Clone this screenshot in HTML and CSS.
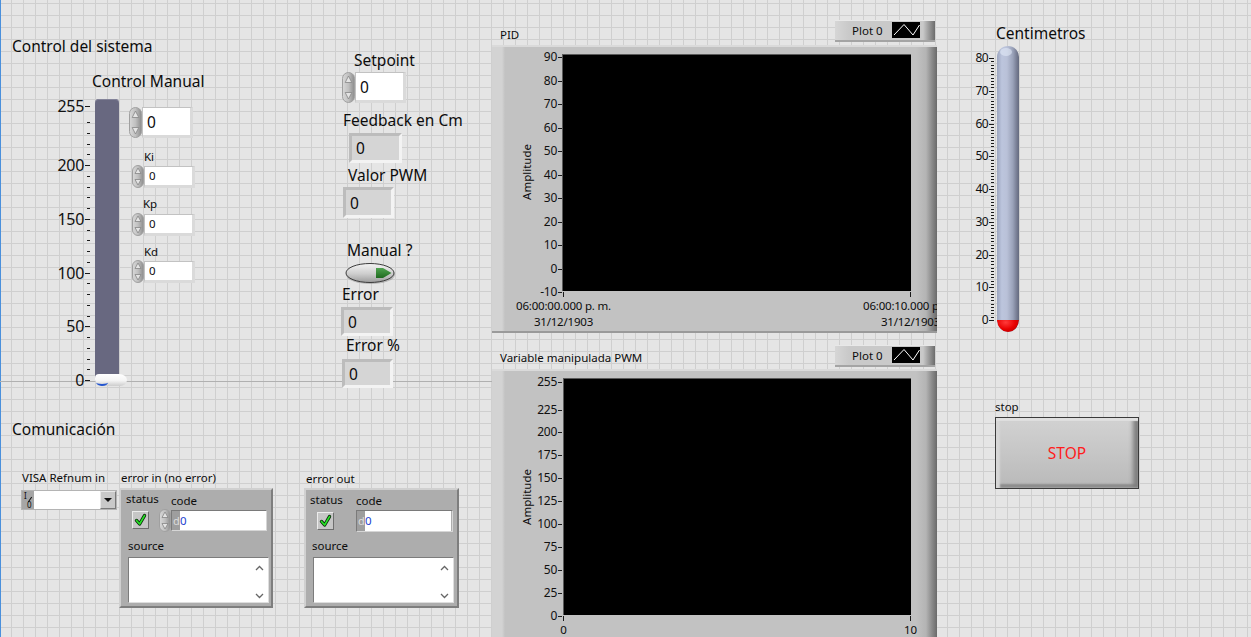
FILE: index.html
```html
<!DOCTYPE html>
<html lang="es">
<head>
  <meta charset="UTF-8">
  <meta name="viewport" content="width=device-width, initial-scale=1.0">
  <title>Control del sistema</title>
  <link rel="stylesheet" href="styles.css">
</head>
<body>
  <svg class="defs" width="0" height="0">
    <defs>
      <linearGradient id="spinFace" x1="0" x2="1" y1="0" y2="0">
        <stop offset="0" stop-color="#d8d8d8"/>
        <stop offset="0.5" stop-color="#c0c0c0"/>
        <stop offset="1" stop-color="#8c8c8c"/>
      </linearGradient>
      <linearGradient id="ledFace" x1="0" x2="0" y1="0" y2="1">
        <stop offset="0" stop-color="#f4f4f4"/>
        <stop offset="0.55" stop-color="#cdcdcd"/>
        <stop offset="1" stop-color="#9c9c9c"/>
      </linearGradient>
      <linearGradient id="ledGreen" x1="0" x2="0" y1="0" y2="1">
        <stop offset="0" stop-color="#4fa34f"/>
        <stop offset="1" stop-color="#1f6a1f"/>
      </linearGradient>
      <symbol id="spinLg" viewBox="0 0 13 31">
        <rect x="0.5" y="0.5" width="12" height="30" rx="6" fill="url(#spinFace)" stroke="#a0a0a0"/>
        <path d="M6.5 4 L9.8 10.5 H3.2 Z" fill="#e4e4e4" stroke="#858585" stroke-width="0.8"/>
        <path d="M6.5 27 L9.8 20.5 H3.2 Z" fill="#e4e4e4" stroke="#858585" stroke-width="0.8"/>
      </symbol>
      <symbol id="spinSm" viewBox="0 0 12 23">
        <rect x="0.5" y="0.5" width="11" height="22" rx="5.5" fill="url(#spinFace)" stroke="#a0a0a0"/>
        <path d="M6 3 L9 8.5 H3 Z" fill="#e4e4e4" stroke="#858585" stroke-width="0.8"/>
        <path d="M6 20 L9 14.5 H3 Z" fill="#e4e4e4" stroke="#858585" stroke-width="0.8"/>
      </symbol>
      <symbol id="tick" viewBox="0 0 16 18">
        <path d="M3.5 9.5 L7 13.5 L12.5 4" fill="none" stroke="#0c2e0c" stroke-width="3.8" stroke-linecap="round" stroke-linejoin="round"/>
        <path d="M3.5 9.5 L7 13.5 L12.5 4" fill="none" stroke="#27e627" stroke-width="1.8" stroke-linecap="round" stroke-linejoin="round"/>
      </symbol>
      <symbol id="plotLine" viewBox="0 0 28 16">
        <rect width="28" height="16" fill="#000"/>
        <polyline points="2,13 12,2.5 21,13 27.5,3" fill="none" stroke="#fff" stroke-width="1"/>
      </symbol>
    </defs>
  </svg>

  <div class="panel">
    <div class="divider"></div>

    <!-- Control del sistema -->
    <div class="cap big cap-sistema">Control del sistema</div>
    <div class="cap big cap-manual">Control Manual</div>

    <div class="scale scale-slider" data-min="0" data-max="255" data-labels="255,200,150,100,50,0" data-minor="10"></div>
    <div class="slider-track"></div>
    <div class="slider-thumb"></div>

    <div class="num num-lg num-manual">
      <svg class="spin-lg"><use href="#spinLg"/></svg>
      <span class="num-box">0</span>
    </div>

    <div class="cap small cap-ki">Ki</div>
    <div class="num num-sm num-ki">
      <svg class="spin-sm"><use href="#spinSm"/></svg>
      <span class="num-box">0</span>
    </div>

    <div class="cap small cap-kp">Kp</div>
    <div class="num num-sm num-kp">
      <svg class="spin-sm"><use href="#spinSm"/></svg>
      <span class="num-box">0</span>
    </div>

    <div class="cap small cap-kd">Kd</div>
    <div class="num num-sm num-kd">
      <svg class="spin-sm"><use href="#spinSm"/></svg>
      <span class="num-box">0</span>
    </div>

    <!-- setpoint / indicadores -->
    <div class="cap big cap-setpoint">Setpoint</div>
    <div class="num num-lg num-setpoint">
      <svg class="spin-lg"><use href="#spinLg"/></svg>
      <span class="num-box">0</span>
    </div>

    <div class="cap big cap-feedback">Feedback en Cm</div>
    <div class="ind ind-feedback">0</div>

    <div class="cap big cap-pwm">Valor PWM</div>
    <div class="ind ind-pwm">0</div>

    <div class="cap big cap-manualq">Manual ?</div>
    <svg class="led-manual" width="51" height="23" viewBox="0 0 51 23">
      <ellipse cx="25.5" cy="12.5" rx="24.5" ry="9.5" fill="#8a8a8a" opacity="0.5"/>
      <ellipse cx="25" cy="11" rx="24" ry="9.5" fill="url(#ledFace)" stroke="#3c3c3c"/>
      <path d="M31 6 H38 L46.5 11 L38 16 H31 Z" fill="url(#ledGreen)"/>
    </svg>

    <div class="cap big cap-error">Error</div>
    <div class="ind ind-error">0</div>

    <div class="cap big cap-errorpct">Error %</div>
    <div class="ind ind-errorpct">0</div>

    <!-- grafica PID -->
    <div class="cap small cap-pid">PID</div>
    <div class="legend legend-pid">
      <span>Plot 0</span>
      <svg class="legend-icon" width="28" height="16"><use href="#plotLine"/></svg>
    </div>
    <div class="graph graph-pid">
      <div class="scale scale-graph" data-min="-10" data-max="90" data-labels="90,80,70,60,50,40,30,20,10,0,-10"></div>
      <span class="axis-name">Amplitude</span>
      <div class="plot"></div>
      <i class="xtick xtick-start"></i>
      <i class="xtick xtick-end"></i>
      <div class="xlab xlab-start">06:00:00.000 p. m.<br>31/12/1903</div>
      <div class="xlab xlab-end">06:00:10.000 p. m.<br>31/12/1903</div>
    </div>

    <!-- grafica PWM -->
    <div class="cap small cap-pwmvar">Variable manipulada PWM</div>
    <div class="legend legend-pwm">
      <span>Plot 0</span>
      <svg class="legend-icon" width="28" height="16"><use href="#plotLine"/></svg>
    </div>
    <div class="graph graph-pwm">
      <div class="scale scale-graph" data-min="0" data-max="255" data-labels="255,225,200,175,150,125,100,75,50,25,0"></div>
      <span class="axis-name">Amplitude</span>
      <div class="plot"></div>
      <i class="xtick xtick-start"></i>
      <i class="xtick xtick-end"></i>
      <div class="xlab xlab-start">0</div>
      <div class="xlab xlab-end">10</div>
    </div>

    <!-- nivel -->
    <div class="cap big cap-cm">Centimetros</div>
    <div class="scale scale-thermo" data-min="0" data-max="80" data-labels="80,70,60,50,40,30,20,10,0" data-minor="1"></div>
    <div class="tube">
      <div class="tube-fill"></div>
    </div>

    <div class="cap small cap-stop">stop</div>
    <button class="stop-btn">STOP</button>

    <!-- comunicacion -->
    <div class="cap big cap-comm">Comunicación</div>

    <div class="cap small cap-visa">VISA Refnum in</div>
    <div class="visa">
      <span class="io"><b>I</b><b>0</b></span>
      <span class="visa-field"></span>
      <span class="visa-drop"><i></i></span>
    </div>

    <div class="cap small cap-errin">error in (no error)</div>
    <div class="cluster cluster-in">
      <div class="cl-row">
        <div class="cl-status">
          <span class="cl-lbl">status</span>
          <svg class="check" width="17" height="18"><use href="#tick"/></svg>
        </div>
        <div class="cl-code">
          <span class="cl-lbl">code</span>
          <div class="code-row">
            <svg class="spin-sm"><use href="#spinSm"/></svg>
            <span class="code-box"><span class="radix">d</span><span class="code-val">0</span></span>
          </div>
        </div>
      </div>
      <div class="cl-source">
        <span class="cl-lbl">source</span>
        <div class="source-box">
          <span class="scroll">
            <svg width="9" height="6"><polyline points="1,5 4.5,1.5 8,5" fill="none" stroke="#666" stroke-width="1.3"/></svg>
            <svg width="9" height="6"><polyline points="1,1 4.5,4.5 8,1" fill="none" stroke="#666" stroke-width="1.3"/></svg>
          </span>
        </div>
      </div>
    </div>

    <div class="cap small cap-errout">error out</div>
    <div class="cluster cluster-out">
      <div class="cl-row">
        <div class="cl-status">
          <span class="cl-lbl">status</span>
          <svg class="check" width="17" height="18"><use href="#tick"/></svg>
        </div>
        <div class="cl-code">
          <span class="cl-lbl">code</span>
          <span class="code-box"><span class="radix">d</span><span class="code-val">0</span></span>
        </div>
      </div>
      <div class="cl-source">
        <span class="cl-lbl">source</span>
        <div class="source-box">
          <span class="scroll">
            <svg width="9" height="6"><polyline points="1,5 4.5,1.5 8,5" fill="none" stroke="#666" stroke-width="1.3"/></svg>
            <svg width="9" height="6"><polyline points="1,1 4.5,4.5 8,1" fill="none" stroke="#666" stroke-width="1.3"/></svg>
          </span>
        </div>
      </div>
    </div>
  </div>

  <script>
    // escalas: etiquetas y marcas a partir de data-min / data-max
    document.querySelectorAll(".scale").forEach(function (scale) {
      const min = Number(scale.dataset.min);
      const max = Number(scale.dataset.max);
      const labels = scale.dataset.labels.split(",").map(Number);
      const step = Number(scale.dataset.minor || 0);
      const h = scale.clientHeight;
      const pos = v => Math.round((max - v) / (max - min) * h);

      const tick = (v, kind) => {
        const t = document.createElement("i");
        t.className = "tick " + kind;
        t.style.top = pos(v) + "px";
        scale.appendChild(t);
      };

      labels.forEach(v => {
        const n = document.createElement("span");
        n.className = "scale-num";
        n.textContent = v;
        n.style.top = pos(v) + "px";
        scale.appendChild(n);
        tick(v, "major");
      });

      if (step) {
        for (let v = min + step; v < max; v += step) {
          if (labels.some(l => Math.abs(l - v) <= step / 2)) continue;
          tick(v, "minor");
        }
      }
    });
  </script>
</body>
</html>
```

FILE: styles.css
```css
* {
  margin: 0;
  padding: 0;
  box-sizing: border-box;
}

html, body {
  width: 100%;
  height: 100%;
  overflow: hidden;
  background: #e5e5e5;
}

body {
  font-family: "Noto Sans", "Open Sans", sans-serif;
  color: #0c0c0c;
}

.defs {
  position: absolute;
}

.panel {
  position: relative;
  width: 1251px;
  height: 637px;
  overflow: hidden;
  background-color: #e5e5e5;
  background-image:
    linear-gradient(to right, #cfcfcf 1px, transparent 1px),
    linear-gradient(to bottom, #cfcfcf 1px, transparent 1px);
  background-size: 12px 12px;
  background-position: 11px 3px;
}

.panel::before {
  content: "";
  position: absolute;
  left: 0;
  top: 0;
  bottom: 0;
  width: 1px;
  background: #4a90dc;
}

.divider {
  position: absolute;
  left: 0;
  top: 381px;
  width: 492px;
  height: 1px;
  background: #b0b0b0;
}

/* etiquetas */
.cap {
  position: absolute;
  white-space: nowrap;
}

.cap.big {
  font-size: 15.5px;
  line-height: 18px;
}

.cap.small {
  font-size: 11.5px;
  line-height: 14px;
}

.cap-sistema { left: 12px; top: 37px; }
.cap-manual { left: 92px; top: 72px; }
.cap-setpoint { left: 354px; top: 51px; }
.cap-feedback { left: 343px; top: 111px; }
.cap-pwm { left: 348px; top: 166px; }
.cap-manualq { left: 347px; top: 241px; }
.cap-error { left: 342px; top: 285px; }
.cap-errorpct { left: 346px; top: 336px; }
.cap-cm { left: 996px; top: 24px; }
.cap-comm { left: 12px; top: 420px; }

.cap-ki { left: 144px; top: 150px; }
.cap-kp { left: 143px; top: 197px; }
.cap-kd { left: 144px; top: 245px; }
.cap-pid { left: 500px; top: 28px; }
.cap-pwmvar { left: 500px; top: 351px; }
.cap-stop { left: 995px; top: 400px; }
.cap-visa { left: 22px; top: 471px; }
.cap-errin { left: 121px; top: 471px; }
.cap-errout { left: 306px; top: 472px; }

/* escalas */
.scale {
  position: absolute;
}

.scale-num {
  position: absolute;
  right: 7px;
  transform: translateY(-50%);
  white-space: nowrap;
  color: #111;
}

.tick {
  position: absolute;
  right: 1px;
  height: 1px;
  background: #1a1a1a;
}

.tick.major { width: 5px; }
.tick.minor { width: 3px; }

.scale-slider {
  left: 30px;
  top: 106px;
  width: 61px;
  height: 274px;
  font-size: 16px;
  line-height: 18px;
  letter-spacing: -0.3px;
}

.scale-thermo {
  left: 950px;
  top: 58px;
  width: 45px;
  height: 262px;
  font-size: 12px;
  line-height: 14px;
  letter-spacing: -0.6px;
}

.scale-graph {
  left: 0;
  width: 70px;
  font-size: 12px;
  line-height: 14px;
  letter-spacing: -0.3px;
}

.scale-graph .scale-num { right: 5px; }
.scale-graph .tick { right: 0; width: 4px; }

.graph-pid .scale-graph { top: 10px; height: 235px; }
.graph-pwm .scale-graph { top: 11px; height: 234px; }

/* slider */
.slider-track {
  position: absolute;
  left: 95px;
  top: 99px;
  width: 24px;
  height: 283px;
  background: #686880;
  border-radius: 4px 4px 0 0;
  box-shadow: inset 0 1px 0 #84849a;
}

.slider-thumb {
  position: absolute;
  left: 95px;
  top: 374px;
  width: 32px;
  height: 12px;
  background: linear-gradient(#ffffff, #f4f4f4 55%, #cdcdcd);
  border-radius: 4px 8px 7px 6px / 4px 6px 6px 6px;
  overflow: hidden;
}

.slider-thumb::after {
  content: "";
  position: absolute;
  left: 1px;
  bottom: 0;
  width: 12px;
  height: 5px;
  border-bottom: 2px solid #2456d0;
  border-radius: 0 0 50% 50%;
}

/* numericos */
.num {
  position: absolute;
  display: flex;
  align-items: center;
}

.num-box {
  display: flex;
  align-items: center;
  background: #fff;
  border-style: solid;
  border-color: #c2c2c2 #dadada #dadada #c2c2c2;
}

.num-lg .num-box {
  width: 51px;
  height: 31px;
  border-width: 1px 3px 3px 1px;
  padding-left: 4px;
  font-size: 15.5px;
}

.num-sm .num-box {
  width: 51px;
  height: 22px;
  border-width: 1px 3px 3px 1px;
  padding-left: 4px;
  font-size: 11.5px;
}

.spin-lg { width: 13px; height: 31px; }
.spin-sm { width: 12px; height: 23px; }

.num-manual { left: 129px; top: 107px; }
.num-ki { left: 132px; top: 165px; }
.num-kp { left: 132px; top: 213px; }
.num-kd { left: 132px; top: 260px; }
.num-setpoint { left: 342px; top: 72px; }

/* indicadores */
.ind {
  position: absolute;
  display: flex;
  align-items: center;
  padding-left: 4px;
  font-size: 15.5px;
  background: #d5d5d5;
  border: 3px solid;
  border-color: #bcbcbc #f3f3f3 #f3f3f3 #bcbcbc;
}

.ind-feedback { left: 349px; top: 133px; width: 53px; height: 30px; }
.ind-pwm { left: 343px; top: 187px; width: 51px; height: 31px; }
.ind-error { left: 341px; top: 307px; width: 52px; height: 29px; }
.ind-errorpct { left: 342px; top: 359px; width: 51px; height: 29px; }

.led-manual {
  position: absolute;
  left: 345px;
  top: 262px;
}

/* graficas */
.legend {
  position: absolute;
  width: 100px;
  height: 22px;
  display: flex;
  align-items: center;
  padding: 0 15px 1px 17px;
  font-size: 11.5px;
  background: linear-gradient(to right, #d6d6d6 0, #c9c9c9 14px, #c9c9c9 88px, #8a8a8a 96px, #6c6c6c 100%);
  border-top: 1px solid #e8e8e8;
  border-bottom: 2px solid #a4a4a4;
}

.legend-icon {
  margin-left: auto;
}

.legend-pid { left: 835px; top: 20px; }
.legend-pwm { left: 835px; top: 345px; }

.graph {
  position: absolute;
  overflow: hidden;
  background: linear-gradient(to right, #d3d3d3 0, #d3d3d3 10px, #c2c2c2 13px, #c2c2c2 424px, #b4b4b4 434px, #8a8a8a 440px, #6a6a6a 100%);
  border-top: 2px solid #dadada;
  border-bottom: 2px solid #9a9a9a;
}

.graph-pid { left: 492px; top: 45px; width: 445px; height: 288px; }
.graph-pwm { left: 492px; top: 369px; width: 445px; height: 268px; border-bottom: 0; }

.plot {
  position: absolute;
  top: 7px;
  width: 349px;
  height: 237px;
  background: #000;
  border-top: 1px solid #5a5a5a;
  border-left: 1px solid #5a5a5a;
}

.graph-pid .plot { left: 70px; }
.graph-pwm .plot { left: 71px; width: 348px; }

.axis-name {
  position: absolute;
  left: 35px;
  font-size: 11.5px;
  line-height: 14px;
  white-space: nowrap;
  transform: translate(-50%, -50%) rotate(-90deg);
}

.graph-pid .axis-name { top: 125px; }
.graph-pwm .axis-name { top: 126px; }

.xtick {
  position: absolute;
  top: 245px;
  width: 1px;
  height: 5px;
  background: #1a1a1a;
}

.xtick-start { left: 71px; }
.xtick-end { left: 418px; }

.xlab {
  position: absolute;
  top: 251px;
  font-size: 11.5px;
  line-height: 16px;
  letter-spacing: -0.2px;
  text-align: center;
  white-space: nowrap;
  transform: translateX(-50%);
}

.xlab-start { left: 71.5px; }
.xlab-end { left: 418.5px; }

.graph-pwm .xtick { top: 245px; }
.graph-pwm .xlab { top: 252px; line-height: 14px; }

/* termometro */
.tube {
  position: absolute;
  left: 997px;
  top: 46px;
  width: 22px;
  height: 286px;
  border-radius: 11px 11px 11px 11px / 11px 11px 12px 12px;
  overflow: hidden;
  background: linear-gradient(to right, #9ca5be 0, #bcc5dd 22%, #b9c1d8 45%, #9aa2b9 72%, #767c92 90%, #646a7e 100%);
}

.tube::before {
  content: "";
  position: absolute;
  left: 3px;
  top: 2px;
  width: 12px;
  height: 8px;
  border-radius: 50%;
  background: rgba(230, 236, 250, 0.55);
}

.tube-fill {
  position: absolute;
  left: 0;
  bottom: 0;
  width: 100%;
  height: 12px;
  border-radius: 0 0 11px 11px / 0 0 12px 12px;
  background: radial-gradient(ellipse at 40% 20%, #ff3a3a 0, #e80000 50%, #a00000 100%);
}

/* boton stop */
.stop-btn {
  position: absolute;
  left: 995px;
  top: 417px;
  width: 144px;
  height: 72px;
  font-family: "Noto Sans", "Open Sans", sans-serif;
  font-size: 15.5px;
  color: #ff1c1c;
  background: linear-gradient(#d2d2d2, #c6c6c6 50%, #b9b9b9);
  border: 1px solid #3a3a3a;
  box-shadow:
    inset 0 3px 1px #e0e0e0,
    inset 4px 0 2px #d6d6d6,
    inset -6px 0 4px -1px #7e7e7e,
    inset 0 -4px 2px #8e8e8e;
}

/* VISA */
.visa {
  position: absolute;
  left: 21px;
  top: 490px;
  width: 96px;
  height: 20px;
  display: flex;
  border: 1px solid #b4b4b4;
}

.io {
  position: relative;
  width: 12px;
  display: flex;
  flex-direction: column;
  background: #a6a6a6;
  font-size: 8px;
  line-height: 9px;
  padding-left: 2px;
}

.io b {
  font-weight: normal;
}

.io b + b {
  padding-left: 3px;
}

.io::after {
  content: "";
  position: absolute;
  left: 5px;
  top: 8px;
  width: 6px;
  height: 1px;
  background: #111;
  transform: rotate(-55deg);
}

.visa-field {
  flex: 1;
  background: #fff;
}

.visa-drop {
  width: 16px;
  display: flex;
  align-items: center;
  justify-content: center;
  background: #c9c9c9;
  border: 1px solid;
  border-color: #e8e8e8 #7a7a7a #7a7a7a #e8e8e8;
}

.visa-drop i {
  border-left: 4px solid transparent;
  border-right: 4px solid transparent;
  border-top: 4px solid #111;
}

/* clusters de error */
.cluster {
  position: absolute;
  top: 488px;
  width: 154px;
  height: 120px;
  display: flex;
  flex-direction: column;
  background: #adadad;
  border: 2px solid;
  border-color: #d0d0d0 #7e7e7e #7e7e7e #d0d0d0;
  font-size: 11.5px;
}

.cluster-in { left: 119px; padding: 2px 4px 0 5px; }
.cluster-out { left: 304px; padding: 3px 4px 0 4px; width: 155px; }

.cl-lbl {
  display: block;
  line-height: 14px;
  white-space: nowrap;
}

.cl-row {
  display: flex;
}

.cl-status {
  display: flex;
  flex-direction: column;
  align-items: flex-start;
}

.check {
  margin-top: 5px;
  background: #c6c6c6;
  border: 1px solid;
  border-color: #ececec #6e6e6e #6e6e6e #ececec;
}

.cl-code {
  display: flex;
  flex-direction: column;
  align-items: flex-start;
}

.code-row {
  display: flex;
  align-items: center;
  margin-top: 1px;
}

.code-box {
  display: flex;
  height: 21px;
  border: 1px solid;
  border-color: #7a7a7a #d6d6d6 #d6d6d6 #7a7a7a;
}

.radix {
  width: 8px;
  background: #9e9e9e;
  color: #dcdcdc;
  line-height: 19px;
  font-size: 11px;
  padding-left: 1px;
}

.code-val {
  width: 86px;
  background: #fff;
  color: #1c3fd0;
  line-height: 19px;
}

.cluster-in .cl-status { width: 35px; }
.cluster-in .cl-status .check { margin-left: 6px; }
.cluster-in .cl-code .cl-lbl { margin: 2px 0 0 12px; }

.cluster-out .cl-status { width: 49px; }
.cluster-out .cl-status .check { margin: 5px 0 0 7px; }
.cluster-out .cl-code .cl-lbl { margin: 1px 0 0 0; }
.cluster-out .code-box { margin-top: 2px; width: 97px; height: 22px; }

.cl-source {
  margin-top: 7px;
  padding-left: 2px;
}

.source-box {
  width: 141px;
  height: 46px;
  margin-top: 4px;
  display: flex;
  justify-content: flex-end;
  background: #fff;
  border: 1px solid;
  border-color: #7c7c7c #dedede #dedede #7c7c7c;
}

.cluster-out .source-box { margin-left: 1px; }

.scroll {
  width: 18px;
  display: flex;
  flex-direction: column;
  align-items: center;
  justify-content: space-between;
  padding: 7px 0 3px;
}
```
